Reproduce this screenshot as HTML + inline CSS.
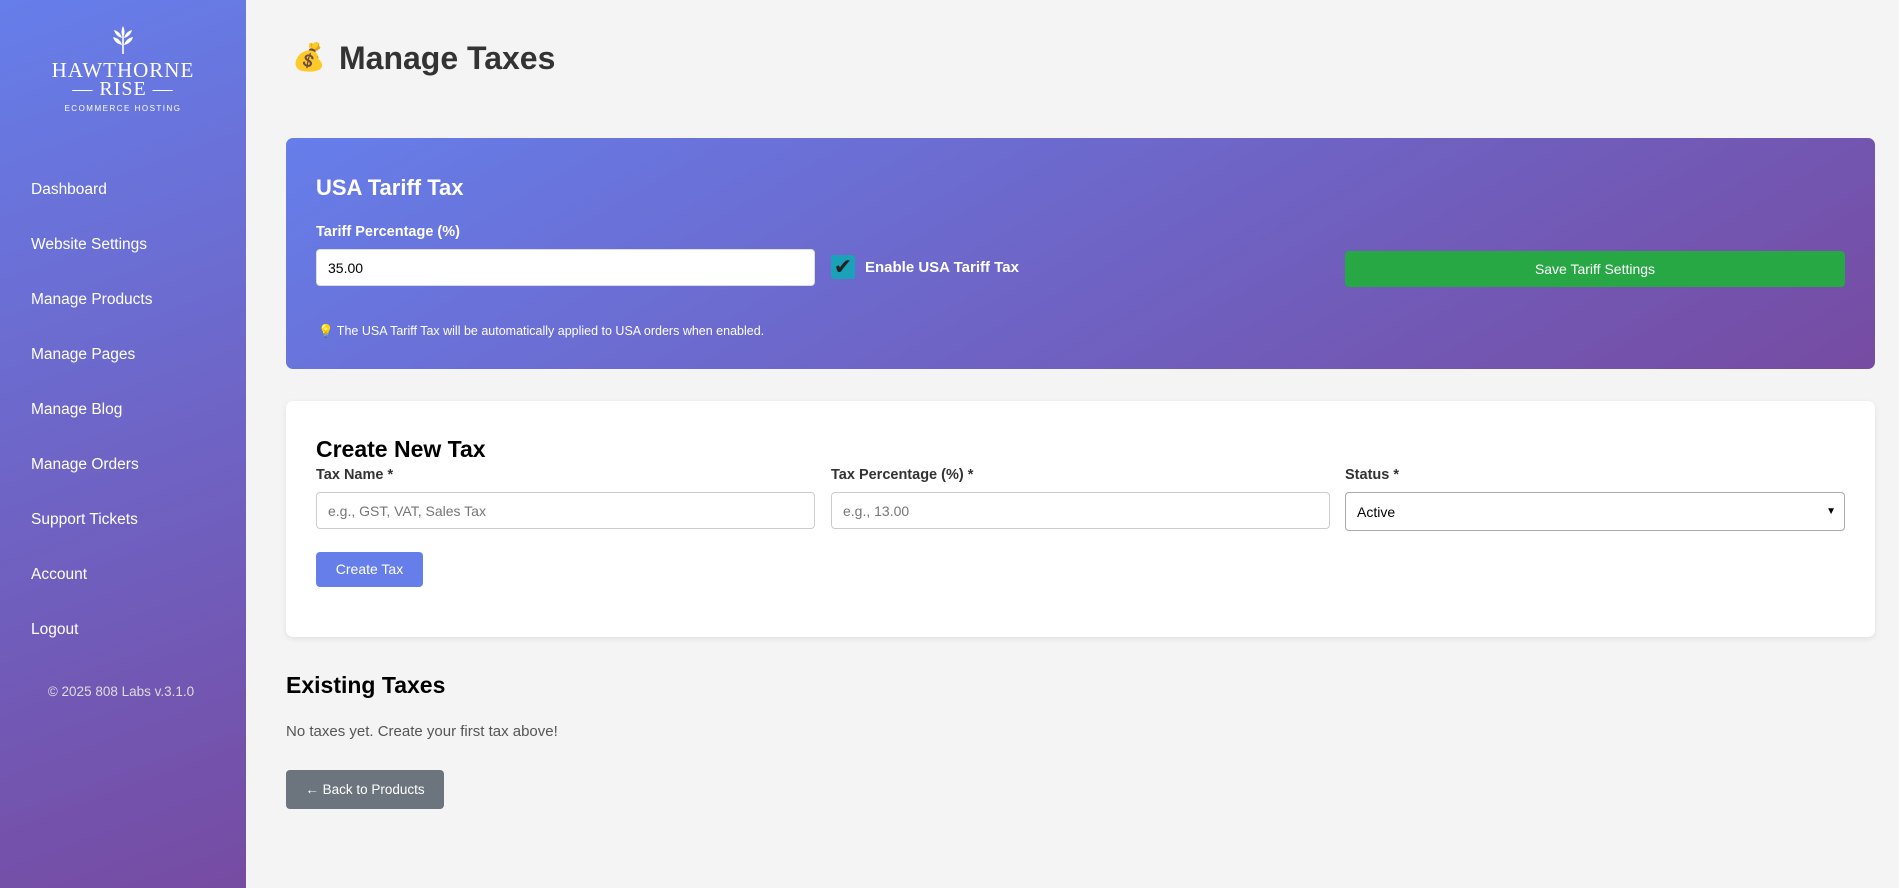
<!DOCTYPE html>
<html><head><meta charset="utf-8"><style>
*{box-sizing:border-box;margin:0;padding:0}
body{width:1899px;height:888px;background:#f4f4f4;font-family:"Liberation Sans",sans-serif;position:relative;overflow:hidden}
.sb{position:absolute;left:0;top:0;width:246px;height:888px;background:linear-gradient(160deg,#667eea 0%,#764ba2 100%);color:#fff}
.logo{position:absolute;left:0;width:246px;text-align:center;font-family:"Liberation Serif",serif}
.nav a{position:absolute;left:31px;font-size:15.5px;color:#fff;text-decoration:none}
.card{position:absolute;left:286px;width:1589px;border-radius:7px}
.c1{top:138px;height:231px;background:linear-gradient(150deg,#667eea 0%,#764ba2 100%);color:#fff}
.c2{top:401px;height:236px;background:#fff;box-shadow:0 2px 6px rgba(0,0,0,.08)}
.abs{position:absolute}
input,.sel{position:absolute;height:37px;border:1px solid #ccc;border-radius:4px;background:#fff;font-size:14px;padding-left:11px;display:flex;align-items:center;font-family:"Liberation Sans",sans-serif}
</style></head><body>
<div class="sb">
 <svg class="abs" style="left:108px;top:24px" width="30" height="32" viewBox="0 0 30 32"><g fill="#fff"><path d="M15 2c2 4 2 8 0 11c-2-3-2-7 0-11z"/><path d="M14 14c-4-1-7-4-8-8c4 1 7 4 8 8z"/><path d="M16 14c4-1 7-4 8-8c-4 1-7 4-8 8z"/><path d="M14 21c-5-1-8-4-9-8c5 1 8 4 9 8z"/><path d="M16 21c5-1 8-4 9-8c-5 1-8 4-9 8z"/><rect x="14.2" y="12" width="1.6" height="18"/></g></svg>
 <div class="logo" style="top:58px;font-size:21px;letter-spacing:1px">HAWTHORNE</div>
 <div class="logo" style="top:78px;font-size:20px;letter-spacing:1px">— RISE —</div>
 <div class="logo" style="top:104px;font-size:8px;letter-spacing:1.5px;font-family:'Liberation Sans',sans-serif">ECOMMERCE HOSTING</div>
 <div class="nav">
  <a style="top:181px">Dashboard</a><a style="top:236px">Website Settings</a><a style="top:291px">Manage Products</a><a style="top:346px">Manage Pages</a><a style="top:401px">Manage Blog</a><a style="top:456px">Manage Orders</a><a style="top:511px">Support Tickets</a><a style="top:566px">Account</a><a style="top:621px">Logout</a>
 </div>
 <div class="abs" style="top:684px;left:0;width:242px;text-align:center;font-size:13.5px;color:#ddd">© 2025 808 Labs v.3.1.0</div>
</div>
<div class="abs" style="left:292px;top:41px;font-size:27px">💰</div>
<div class="abs" style="left:339px;top:40px;font-size:32px;font-weight:bold;color:#333">Manage Taxes</div>
<div class="card c1">
 <div class="abs" style="left:30px;top:37px;font-size:22px;font-weight:bold">USA Tariff Tax</div>
 <div class="abs" style="left:30px;top:86px;font-size:14.5px;font-weight:bold">Tariff Percentage (%)</div>
 <input style="left:30px;top:111px;width:499px;height:37px;border-color:#ddd" value="35.00">
 <div class="abs" style="left:545px;top:117px;width:24px;height:24px;background:#1aa3b8;border-radius:3px;color:#222;font-size:22px;line-height:24px;text-align:center">✔</div>
 <div class="abs" style="left:579px;top:121px;font-size:15px;font-weight:bold">Enable USA Tariff Tax</div>
 <div class="abs" style="left:1059px;top:113px;width:500px;height:36px;background:#28a745;border-radius:4px;font-size:14px;text-align:center;line-height:36px">Save Tariff Settings</div>
 <div class="abs" style="left:32px;top:186px;font-size:12.5px">💡 The USA Tariff Tax will be automatically applied to USA orders when enabled.</div>
</div>
<div class="card c2">
 <div class="abs" style="left:30px;top:35px;font-size:23px;font-weight:bold;color:#000">Create New Tax</div>
 <div class="abs" style="left:30px;top:66px;font-size:14.5px;font-weight:bold;color:#333">Tax Name *</div>
 <div class="abs" style="left:545px;top:66px;font-size:14.5px;font-weight:bold;color:#333">Tax Percentage (%) *</div>
 <div class="abs" style="left:1059px;top:66px;font-size:14.5px;font-weight:bold;color:#333">Status *</div>
 <input style="left:30px;top:91px;width:499px" placeholder="e.g., GST, VAT, Sales Tax">
 <input style="left:545px;top:91px;width:499px" placeholder="e.g., 13.00">
 <div class="sel" style="left:1059px;top:91px;width:500px;height:39px;border-color:#aaa">Active<span style="position:absolute;right:8px;font-size:10px">▼</span></div>
 <div class="abs" style="left:30px;top:151px;width:107px;height:35px;background:#667eea;border-radius:4px;color:#fff;font-size:14px;text-align:center;line-height:35px">Create Tax</div>
</div>
<div class="abs" style="left:286px;top:672px;font-size:23px;font-weight:bold;color:#000">Existing Taxes</div>
<div class="abs" style="left:286px;top:723px;font-size:15px;color:#555">No taxes yet. Create your first tax above!</div>
<div class="abs" style="left:286px;top:770px;width:158px;height:39px;background:#6c757d;border-radius:4px;color:#fff;font-size:13.5px;text-align:center;line-height:39px">← Back to Products</div>
</body></html>
